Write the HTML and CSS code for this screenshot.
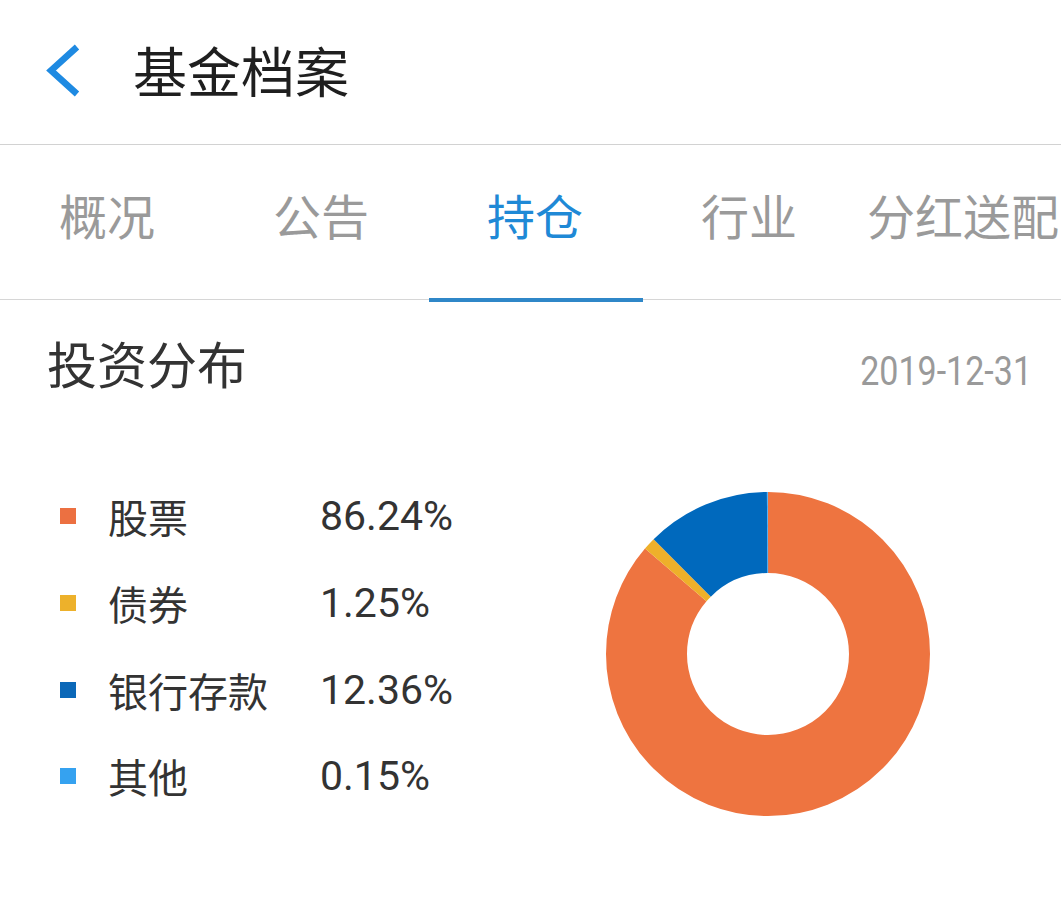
FILE: index.html
```html
<!DOCTYPE html>
<html lang="zh-CN">
<head>
<meta charset="utf-8">
<title>基金档案</title>
<link rel="stylesheet" href="styles.css">
</head>
<body>
<div class="page">
  <header class="topbar">
    <svg class="back" width="40" height="56" viewBox="0 0 40 56">
      <path d="M32 4 L6 27.5 L32 51" fill="none" stroke="#1e8ae2" stroke-width="6.5" stroke-linejoin="miter" stroke-miterlimit="10"/>
    </svg>
    <h1 class="title">基金档案</h1>
  </header>
  <nav class="tabs">
    <div class="tab">概况</div>
    <div class="tab">公告</div>
    <div class="tab active">持仓</div>
    <div class="tab">行业</div>
    <div class="tab">分红送配</div>
  </nav>
  <section class="section">
    <div class="section-head">
      <div class="section-title">投资分布</div>
      <div class="section-date"><span class="date-text">2019-12-31</span></div>
    </div>
    <div class="dist">
      <ul class="legend">
        <li class="row"><span class="sq sq-stock"></span><span class="label">股票</span><span class="value">86.24%</span></li>
        <li class="row"><span class="sq sq-bond"></span><span class="label">债券</span><span class="value">1.25%</span></li>
        <li class="row"><span class="sq sq-bank"></span><span class="label">银行存款</span><span class="value">12.36%</span></li>
        <li class="row"><span class="sq sq-other"></span><span class="label">其他</span><span class="value">0.15%</span></li>
      </ul>
      <svg class="donut" width="324" height="324" viewBox="0 0 324 324">
        <g transform="rotate(-90 162 162)" fill="none" stroke-width="81">
          <circle cx="162" cy="162" r="121.5" stroke="#ee7440" stroke-dasharray="658.36 763.41" stroke-dashoffset="0"/>
          <circle cx="162" cy="162" r="121.5" stroke="#eeb02a" stroke-dasharray="9.54 763.41" stroke-dashoffset="-658.36"/>
          <circle cx="162" cy="162" r="121.5" stroke="#0069bd" stroke-dasharray="94.36 763.41" stroke-dashoffset="-667.90"/>
          <circle cx="162" cy="162" r="121.5" stroke="#36a3f2" stroke-dasharray="1.15 763.41" stroke-dashoffset="-762.26"/>
        </g>
      </svg>
    </div>
  </section>
</div>
</body>
</html>
```
FILE: styles.css
```css
html, body {
  margin: 0;
  padding: 0;
  background: #ffffff;
}
body {
  font-family: Roboto, "Noto Sans CJK SC", sans-serif;
  color: #333333;
}
.page {
  width: 1061px;
  height: 909px;
  overflow: hidden;
}
.topbar {
  border-bottom: 1px solid #d2d2d2;
  display: flex;
  align-items: center;
  box-sizing: border-box;
  height: 145px;
  padding-left: 45px;
}
.back {
  display: block;
  margin-top: -2px;
}
.title {
  margin: -5px 0 0 48px;
  font-family: "Noto Sans CJK SC", sans-serif;
  font-weight: 400;
  font-size: 54px;
  line-height: 60px;
  color: #1f1f1f;
}
.tabs {
  display: flex;
  height: 155px;
  box-sizing: border-box;
  border-bottom: 1px solid #d6d6d6;
  white-space: nowrap;
}
.tab {
  flex: 0 0 214px;
  position: relative;
  display: flex;
  align-items: center;
  justify-content: center;
  font-family: "Noto Sans CJK SC", sans-serif;
  font-size: 48px;
  color: #9a9a9a;
  padding-bottom: 16px;
  box-sizing: border-box;
}
.tab.active {
  color: #1f89d6;
}
.tab.active::after {
  content: "";
  position: absolute;
  left: 1px;
  right: -1px;
  bottom: -3px;
  height: 4px;
  background: #2f87c8;
}
.section-head {
  display: flex;
  justify-content: space-between;
  align-items: flex-start;
  padding: 33px 29px 0 47px;
}
.section-title {
  font-family: "Noto Sans CJK SC", sans-serif;
  font-size: 50px;
  line-height: 58px;
  color: #333333;
}
.section-date {
  margin-top: 14px;
  font-size: 41px;
  line-height: 48px;
  color: #9a9a9a;
}
.date-text {
  display: inline-block;
  transform: scaleX(0.83);
  transform-origin: right center;
}
.dist {
  display: flex;
  align-items: flex-start;
  padding-left: 60px;
}
.legend {
  list-style: none;
  margin: 78px 0 0 0;
  padding: 0;
  width: 546px;
}
.row {
  height: 86.7px;
  display: flex;
  align-items: center;
}
.sq {
  width: 16px;
  height: 16px;
  flex: 0 0 16px;
  margin-right: 32px;
}
.sq-stock { background: #ec7041; }
.sq-bond { background: #edb12b; }
.sq-bank { background: #0b68b8; }
.sq-other { background: #35a2f0; }
.label {
  width: 212px;
  font-family: "Noto Sans CJK SC", sans-serif;
  font-size: 40px;
  color: #333333;
  white-space: nowrap;
}
.value {
  font-family: Roboto, sans-serif;
  font-size: 41px;
  color: #333333;
}
.donut {
  display: block;
  margin-top: 97px;
}
```
